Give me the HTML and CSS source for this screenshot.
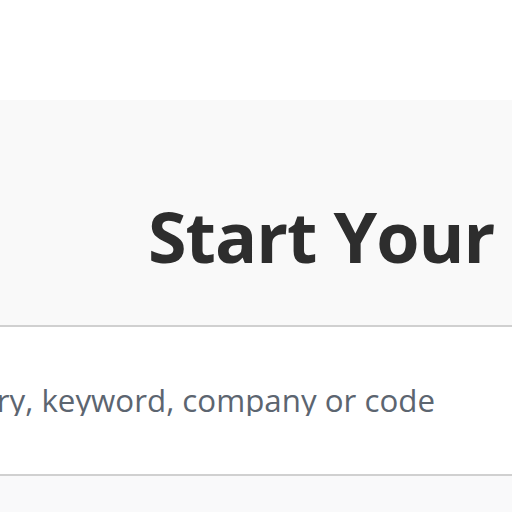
FILE: index.html
```html
<!DOCTYPE html>
<html lang="en">
<head>
<meta charset="utf-8">
<title>Start Your Search</title>
<link rel="stylesheet" href="styles.css">
</head>
<body>
<header class="top"></header>
<section class="hero">
  <h1 class="hero-title">Start Your Search</h1>
</section>
<section class="search">
  <div class="search-field">
    <span class="placeholder">Search by industry, keyword, company or code</span>
  </div>
</section>
<section class="below"></section>
</body>
</html>
```
FILE: styles.css
```css
html, body {
  margin: 0;
  padding: 0;
  background: #ffffff;
  overflow: hidden;
}
body {
  width: 512px;
  height: 512px;
  font-family: "Open Sans", "Liberation Sans", sans-serif;
}
.top {
  height: 100px;
  background: #ffffff;
}
.hero {
  height: 225px;
  background: #f9f9f9;
  display: flex;
  align-items: flex-start;
  overflow: hidden;
}
.hero-title {
  margin: 0;
  padding-top: 136px;
  padding-left: 148px;
  font-size: 70px;
  font-weight: 700;
  letter-spacing: -1px;
  line-height: 0;
  color: #2d2d2d;
  white-space: nowrap;
}
.search {
  height: 147px;
  border-top: 2px solid #d0d0d0;
  border-bottom: 2px solid #d0d0d0;
  background: #ffffff;
  display: flex;
  align-items: center;
}
.search-field {
  width: 435px;
  display: flex;
  justify-content: flex-end;
  overflow: hidden;
  white-space: nowrap;
}
.placeholder {
  font-size: 31.3px;
  color: #5c6570;
  line-height: 1;
}
.below {
  height: 40px;
  background: #f9f9fa;
}
```
